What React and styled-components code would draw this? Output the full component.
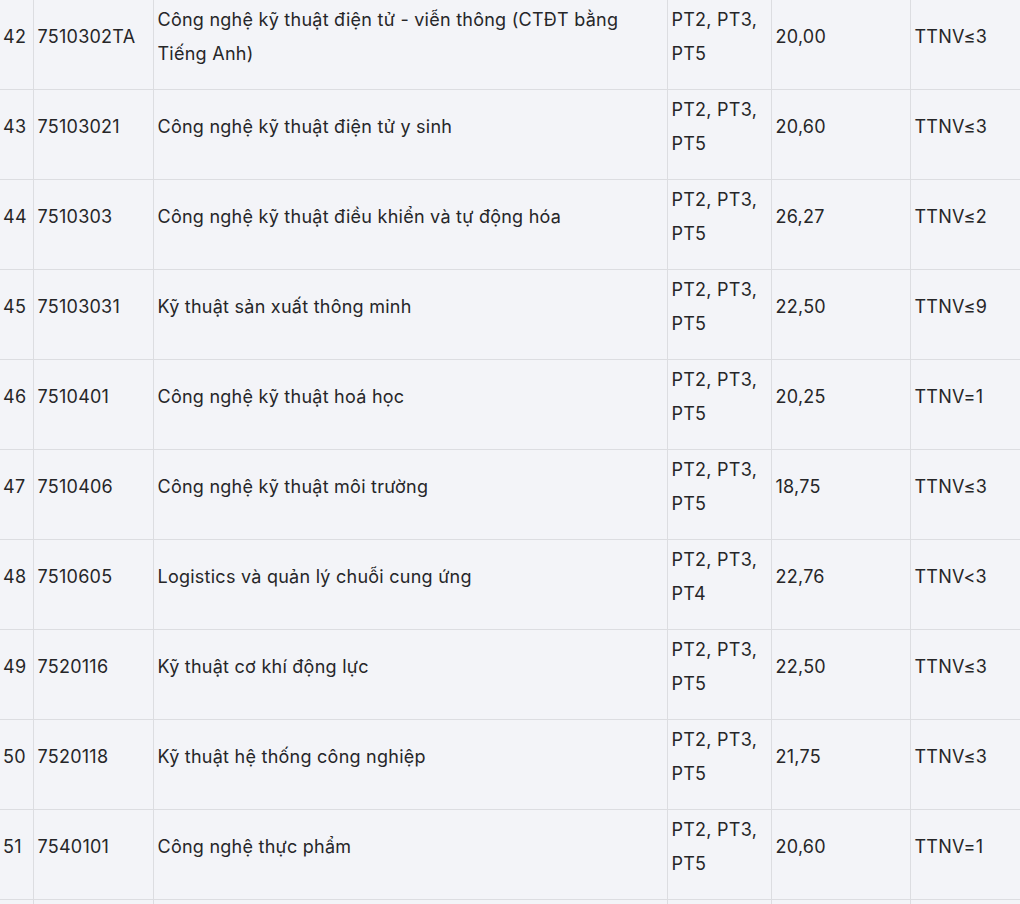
import React from "react";
import styled, { createGlobalStyle } from "styled-components";

const Global = createGlobalStyle`
  html, body { margin: 0; padding: 0; background: #f3f4f8; }
  body { overflow: hidden; }
`;

const Wrap = styled.div`
  width: 1020px;
  overflow: hidden;
  background: #f3f4f8;
`;

const Table = styled.table`
  border-collapse: collapse;
  table-layout: fixed;
  width: 1060px;
  font-family: Inter, "Noto Sans", sans-serif;
  font-size: 18px;
  letter-spacing: 0.25px;
  line-height: 34px;
  color: #262628;
`;

const Row = styled.tr`
  &:first-child td { border-top: none; }
`;

const Cell = styled.td`
  border: 1px solid #dcdde1;
  padding: 3px 4px 18px 4px;
  height: 68px;
  vertical-align: middle;
  text-align: left;
  word-wrap: break-word;
  &:first-child { border-left: none; padding-left: 3px; }
`;

const rows = [
  ["42", "7510302TA", "Công nghệ kỹ thuật điện tử - viễn thông (CTĐT bằng Tiếng Anh)", "PT2, PT3, PT5", "20,00", "TTNV≤3"],
  ["43", "75103021", "Công nghệ kỹ thuật điện tử y sinh", "PT2, PT3, PT5", "20,60", "TTNV≤3"],
  ["44", "7510303", "Công nghệ kỹ thuật điều khiển và tự động hóa", "PT2, PT3, PT5", "26,27", "TTNV≤2"],
  ["45", "75103031", "Kỹ thuật sản xuất thông minh", "PT2, PT3, PT5", "22,50", "TTNV≤9"],
  ["46", "7510401", "Công nghệ kỹ thuật hoá học", "PT2, PT3, PT5", "20,25", "TTNV=1"],
  ["47", "7510406", "Công nghệ kỹ thuật môi trường", "PT2, PT3, PT5", "18,75", "TTNV≤3"],
  ["48", "7510605", "Logistics và quản lý chuỗi cung ứng", "PT2, PT3, PT4", "22,76", "TTNV<3"],
  ["49", "7520116", "Kỹ thuật cơ khí động lực", "PT2, PT3, PT5", "22,50", "TTNV≤3"],
  ["50", "7520118", "Kỹ thuật hệ thống công nghiệp", "PT2, PT3, PT5", "21,75", "TTNV≤3"],
  ["51", "7540101", "Công nghệ thực phẩm", "PT2, PT3, PT5", "20,60", "TTNV=1"],
  ["", "", "", "", "", ""],
];

const widths = [33, 120, 514, 104, 139, 150];

export default function App() {
  return (
    <Wrap>
      <Global />
      <Table>
        <colgroup>
          {widths.map((w, i) => (
            <col key={i} style={{ width: w }} />
          ))}
        </colgroup>
        <tbody>
          {rows.map((r, ri) => (
            <Row key={ri}>
              {r.map((c, i) => (
                <Cell key={i}>{c}</Cell>
              ))}
            </Row>
          ))}
        </tbody>
      </Table>
    </Wrap>
  );
}
